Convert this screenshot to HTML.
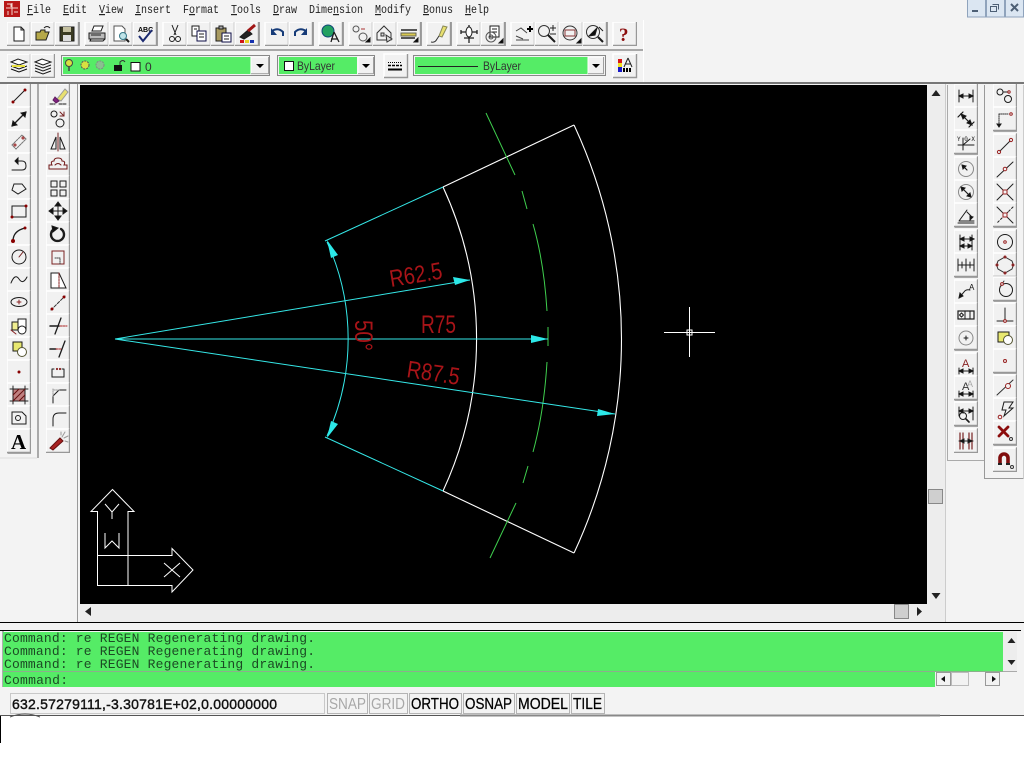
<!DOCTYPE html>
<html><head><meta charset="utf-8"><title>CAD</title>
<style>html,body{margin:0;padding:0;background:#fff;width:1024px;height:768px;overflow:hidden}svg{display:block}</style></head>
<body>
<svg xmlns="http://www.w3.org/2000/svg" width="1024" height="768" viewBox="0 0 1024 768">
<defs>
<filter id="s" x="0" y="0" width="100%" height="100%"><feGaussianBlur stdDeviation="0.35"/></filter>
<g id="b"><rect width="24" height="24" fill="#f1f1f1"/><path d="M0 24V0H24" fill="none" stroke="#fff" stroke-width="1.5"/><path d="M0 23.5H23.5V0" fill="none" stroke="#989898" stroke-width="1.4"/></g>
<path id="dn" d="M-4 -2H4L0 2Z" fill="#000"/>
</defs>
<rect width="1024" height="716" fill="#f3f3f3"/>
<rect y="716" width="1024" height="52" fill="#fff"/>

<!-- title icon + menu -->
<rect x="4" y="1" width="16" height="16" fill="#b81818"/>
<path d="M6 8H18M12 3V15M7 4H11V7M14 12H18M8 11V15" stroke="#f4d8d0" stroke-width="1" fill="none"/>
<g font-family="'Liberation Mono',monospace" font-size="12" fill="#222">
<text x="27" y="13" textLength="24" lengthAdjust="spacingAndGlyphs"><tspan text-decoration="underline">F</tspan>ile</text>
<text x="63" y="13" textLength="24" lengthAdjust="spacingAndGlyphs"><tspan text-decoration="underline">E</tspan>dit</text>
<text x="99" y="13" textLength="24" lengthAdjust="spacingAndGlyphs"><tspan text-decoration="underline">V</tspan>iew</text>
<text x="135" y="13" textLength="36" lengthAdjust="spacingAndGlyphs"><tspan text-decoration="underline">I</tspan>nsert</text>
<text x="183" y="13" textLength="36" lengthAdjust="spacingAndGlyphs">F<tspan text-decoration="underline">o</tspan>rmat</text>
<text x="231" y="13" textLength="30" lengthAdjust="spacingAndGlyphs"><tspan text-decoration="underline">T</tspan>ools</text>
<text x="273" y="13" textLength="24" lengthAdjust="spacingAndGlyphs"><tspan text-decoration="underline">D</tspan>raw</text>
<text x="309" y="13" textLength="54" lengthAdjust="spacingAndGlyphs">Dime<tspan text-decoration="underline">n</tspan>sion</text>
<text x="375" y="13" textLength="36" lengthAdjust="spacingAndGlyphs"><tspan text-decoration="underline">M</tspan>odify</text>
<text x="423" y="13" textLength="30" lengthAdjust="spacingAndGlyphs"><tspan text-decoration="underline">B</tspan>onus</text>
<text x="465" y="13" textLength="24" lengthAdjust="spacingAndGlyphs"><tspan text-decoration="underline">H</tspan>elp</text>
</g>
<!-- window buttons -->
<g>
<rect x="967.500" y="-1" width="18" height="18" fill="#dbe6f2" stroke="#8fa3bc"/>
<rect x="986.500" y="-1" width="18" height="18" fill="#dbe6f2" stroke="#8fa3bc"/>
<rect x="1005.500" y="-1" width="18" height="18" fill="#dbe6f2" stroke="#8fa3bc"/>
<path d="M972 11H978" stroke="#4d5f75" stroke-width="2"/>
<path d="M991.500 6.500H997.500V11.500M989.500 8.500H995.500V13.500H989.500Z" transform="translate(1,-2)" stroke="#4d5f75" fill="none"/>
<path d="M1011 4L1018 11M1018 4L1011 11" stroke="#4d5f75" stroke-width="2"/>
</g>

<!-- toolbar separators -->
<path d="M0 50H644" stroke="#a8a8a8" stroke-width="2"/>
<path d="M643.500 20V82" stroke="#fff"/>
<path d="M0 83H1024" stroke="#777" stroke-width="2"/>

<!-- row 1 buttons -->
<g fill="none" stroke="#1a1a1a" filter="url(#s)">
<use href="#b" x="7" y="22"/><g transform="translate(7,22)"><path d="M7 5H14L17 8V19H7Z" fill="#fff"/><path d="M14 5V8H17"/></g>
<use href="#b" x="31" y="22"/><g transform="translate(31,22)"><path d="M5 10H9L10 8H14V10H18L15 18H5Z" fill="#b5a84a"/><path d="M5 18V10" /><path d="M13 6Q16 3 19 6" stroke-width="1"/></g>
<use href="#b" x="55" y="22"/><g transform="translate(55,22)"><rect x="5" y="5" width="14" height="14" fill="#3b3a20"/><rect x="8" y="5" width="8" height="5" fill="#c4c0a0" stroke="none"/><rect x="8" y="13" width="8" height="6" fill="#ddd" stroke="none"/></g>
<use href="#b" x="85" y="22"/><g transform="translate(85,22)"><path d="M9 4H18L16 9H7Z" fill="#fff"/><path d="M4 11H20V17H4Z" fill="#bbb"/><path d="M6 17L5 19H18L20 17M6 13H16"/></g>
<use href="#b" x="109" y="22"/><g transform="translate(109,22)"><path d="M5 4H13L16 7V19H5Z" fill="#fff" stroke="#555"/><circle cx="14" cy="14" r="3.500" fill="#bfe3e8" stroke="#378"/><path d="M17 17L20 20" stroke-width="2"/></g>
<use href="#b" x="133" y="22"/><g transform="translate(133,22)"><text x="5" y="10" font-family="'Liberation Sans',sans-serif" font-size="7" fill="#000" stroke="none" font-weight="bold">ABC</text><path d="M6 14L10 19L19 8" stroke="#1a2a70" stroke-width="2"/></g>
<use href="#b" x="163" y="22"/><g transform="translate(163,22)"><path d="M9 3L13 13M15 3L11 13"/><circle cx="9" cy="17" r="2.500"/><circle cx="15" cy="17" r="2.500"/></g>
<use href="#b" x="187" y="22"/><g transform="translate(187,22)"><path d="M5 4H12V14H5Z" fill="#fff"/><path d="M10 9H19V19H10Z" fill="#fff" stroke="#114"/><path d="M12 12H17M12 15H17M7 7H10"/></g>
<use href="#b" x="211" y="22"/><g transform="translate(211,22)"><path d="M5 6H15V19H5Z" fill="#a89a60"/><path d="M8 4H12V7H8Z" fill="#aaa"/><path d="M11 11H20V20H11Z" fill="#fff" stroke="#114"/><path d="M13 14H18M13 17H18"/></g>
<use href="#b" x="235" y="22"/><g transform="translate(235,22)"><path d="M5 15L13 8L17 12L9 17Z" fill="#222"/><path d="M13 9L20 3" stroke="#a01818" stroke-width="3"/><rect x="5" y="18" width="4" height="3" fill="#d01818" stroke="none"/><rect x="10" y="18" width="4" height="3" fill="#e8d020" stroke="none"/><rect x="15" y="18" width="4" height="3" fill="#1830b0" stroke="none"/></g>
<use href="#b" x="265" y="22"/><g transform="translate(265,22)"><path d="M7 9Q13 5 18 10V14" stroke="#123a78" stroke-width="2"/><path d="M6 6V13H12Z" fill="#123a78" stroke="none"/></g>
<use href="#b" x="289" y="22"/><g transform="translate(289,22)"><path d="M17 9Q11 5 6 10V14" stroke="#123a78" stroke-width="2"/><path d="M18 6V13H12Z" fill="#123a78" stroke="none"/></g>
<use href="#b" x="319" y="22"/><g transform="translate(319,22)"><circle cx="9" cy="9" r="6" fill="#20a060" stroke="#147"/><path d="M15 10L12 20M15 10L20 20M12 17H19" stroke-width="1.300"/></g>
<use href="#b" x="349" y="22"/><g transform="translate(349,22)"><circle cx="7" cy="7" r="3" stroke="#555"/><circle cx="14" cy="15" r="4" stroke="#555"/><path d="M12 7H16" stroke="#a33"/><path d="M17 20L21 20L21 16Z" fill="#000"/></g>
<use href="#b" x="373" y="22"/><g transform="translate(373,22)"><path d="M4 11L11 4L18 11V18H4Z" stroke="#333"/><path d="M8 11H11V14H8ZM13 13L19 17L14 20Z" stroke="#333" fill="#ddd"/></g>
<use href="#b" x="397" y="22"/><g transform="translate(397,22)"><path d="M4 8H20M4 16H18" stroke="#222" stroke-width="1.500"/><path d="M4 11H19V14H4Z" fill="#d8c850" stroke="#665"/><path d="M17 20L21 20L21 16Z" fill="#000"/></g>
<use href="#b" x="427" y="22"/><g transform="translate(427,22)"><path d="M16 4L20 5L15 15L12 14Z" fill="#e8e070" stroke="#885"/><path d="M4 20Q8 21 10 17L12 14" stroke="#333"/></g>
<use href="#b" x="457" y="22"/><g transform="translate(457,22)"><path d="M12 3V21M4 10H20M7 16H17M4 8V12M20 8V12" stroke="#222" stroke-width="1.300"/><ellipse cx="12" cy="10" rx="3" ry="5" fill="#fff"/></g>
<use href="#b" x="481" y="22"/><g transform="translate(481,22)"><path d="M9 4H18V15H9Z" fill="#fff"/><path d="M11 7H16M11 10H16" /><circle cx="10" cy="15" r="5" stroke="#555"/><circle cx="10" cy="15" r="2" stroke="#555"/><path d="M18 21L22 21L22 17Z" fill="#000"/></g>
<use href="#b" x="511" y="22"/><g transform="translate(511,22)"><path d="M5 9L10 6L16 11M5 14L12 17M5 18H18" stroke="#444"/><path d="M16 7H22M19 4V10" stroke="#000" stroke-width="2"/></g>
<use href="#b" x="535" y="22"/><g transform="translate(535,22)"><circle cx="9" cy="9" r="5.500" stroke="#333"/><path d="M13 13L20 20" stroke-width="2"/><path d="M18 3V9M15 6H21M15 12H21" stroke="#222"/></g>
<use href="#b" x="559" y="22"/><g transform="translate(559,22)"><circle cx="11" cy="11" r="7" stroke="#333"/><rect x="6" y="8" width="10" height="6" stroke="#833"/><path d="M18 21L22 21L22 17Z" fill="#000"/></g>
<use href="#b" x="583" y="22"/><g transform="translate(583,22)"><circle cx="10" cy="10" r="6.500" stroke="#333"/><path d="M6 14L14 6L12 13Z" fill="#111"/><path d="M15 15L20 20" stroke-width="2"/><path d="M16 5L20 9" /></g>
<use href="#b" x="613" y="22"/><text x="619" y="41" font-family="'Liberation Serif',serif" font-size="19" font-weight="bold" fill="#8c1010" stroke="none">?</text>
</g>

<!-- row 2 -->
<g fill="none" stroke="#1a1a1a" filter="url(#s)">
<use href="#b" x="7" y="54"/><g transform="translate(7,54)"><path d="M4 8L11 5L20 8L12 11Z" fill="#fff"/><path d="M4 12L12 15L20 12" stroke="#111"/><path d="M4 15L12 18L20 15" stroke="#111"/><path d="M5 12H18" stroke="#e8e040" stroke-width="2"/></g>
<use href="#b" x="31" y="54"/><g transform="translate(31,54)"><path d="M4 8L11 5L20 8L12 11Z" fill="#fff"/><path d="M4 11L12 14L20 11M4 14L12 17L20 14M4 17L12 20L20 17"/></g>
</g>
<rect x="61.500" y="55.500" width="208" height="20" fill="#f2f2f2" stroke="#888"/>
<rect x="63" y="57" width="188" height="17" fill="#55ec66"/>
<g fill="none" stroke="#333">
<circle cx="69" cy="63" r="3.500" fill="#d8e040" stroke="#444"/><path d="M69 67V71" stroke="#444" stroke-width="1.500"/>
<circle cx="85" cy="65" r="4" fill="#d8e040" stroke="#555" stroke-dasharray="2 1"/>
<circle cx="100" cy="65" r="4" fill="#8ac090" stroke="#7a8f80" stroke-dasharray="2 1"/>
<rect x="114" y="65" width="8" height="6" fill="#111" stroke="none"/><path d="M120 65V62Q123 59 125 62"/>
<rect x="131" y="62.500" width="9" height="8.500" fill="#fff" stroke="#111"/>
</g>
<text x="145" y="71" font-family="'Liberation Sans',sans-serif" font-size="12" fill="#333">0</text>
<use href="#b" transform="translate(251,57) scale(.75,.71)"/><use href="#dn" x="260" y="66"/>

<rect x="277.500" y="55.500" width="97" height="20" fill="#f2f2f2" stroke="#888"/>
<rect x="279" y="57" width="78" height="17" fill="#55ec66"/>
<rect x="284.500" y="61.500" width="9" height="9" fill="#fff" stroke="#111"/>
<text x="297" y="70" font-family="'Liberation Sans',sans-serif" font-size="12" fill="#333" textLength="38" lengthAdjust="spacingAndGlyphs">ByLayer</text>
<use href="#b" transform="translate(358,57) scale(.66,.71)"/><use href="#dn" x="366" y="66"/>

<use href="#b" x="384" y="54"/>
<path d="M388 62.500H402" stroke="#000" stroke-dasharray="1 1"/><path d="M388 65.500H402" stroke="#000" stroke-width="1.500" stroke-dasharray="3 1"/><path d="M388 69.500H402" stroke="#000" stroke-width="2"/>

<rect x="413.500" y="55.500" width="192" height="20" fill="#f2f2f2" stroke="#888"/>
<rect x="415" y="57" width="173" height="17" fill="#55ec66"/>
<path d="M418 66.500H478" stroke="#222"/>
<text x="483" y="70" font-family="'Liberation Sans',sans-serif" font-size="12" fill="#333" textLength="38" lengthAdjust="spacingAndGlyphs">ByLayer</text>
<use href="#b" transform="translate(588,57) scale(.66,.71)"/><use href="#dn" x="596" y="66"/>

<use href="#b" x="613" y="54"/>
<rect x="618" y="59" width="4" height="4" fill="#d81818"/><rect x="618" y="63" width="4" height="4" fill="#f0e020"/><rect x="618" y="67" width="4" height="5" fill="#1818c8"/>
<path d="M628 58L624 67M628 58L632 67M625 64H631" stroke="#222" fill="none"/><path d="M624 68V72M627 68V72M630 68V72" stroke="#000" stroke-width="2"/>

<!-- left toolbars frame -->
<path d="M38 84V458" stroke="#aaa" stroke-width="2"/>
<path d="M77.500 84V622" stroke="#999"/>
<path d="M0 458H37" stroke="#ddd"/>

<!-- left col 1 -->
<g fill="none" stroke="#1a1a1a" stroke-linecap="round" filter="url(#s)">
<use href="#b" x="7" y="84"/><g transform="translate(7,84)"><path d="M6 18L18 6"/><circle cx="6" cy="18" r="1" fill="#800" stroke="#800"/><circle cx="18" cy="6" r="1" fill="#800" stroke="#800"/></g>
<use href="#b" x="7" y="107"/><g transform="translate(7,107)"><path d="M5 19L19 5" stroke-width="1.300"/><path d="M5 19L6 14L10 18ZM19 5L18 10L14 6Z" fill="#111"/></g>
<use href="#b" x="7" y="130"/><g transform="translate(7,130)"><path d="M5 15L15 5L19 9L9 19Z" stroke="#777" stroke-dasharray="2 1"/><circle cx="8" cy="15" r="1" stroke="#922"/><circle cx="16" cy="8" r="1" stroke="#922"/></g>
<use href="#b" x="7" y="153"/><g transform="translate(7,153)"><path d="M5 17H15Q19 17 19 13Q19 8 15 8H11"/><path d="M11 5V11L8 8Z" fill="#111"/></g>
<use href="#b" x="7" y="176"/><g transform="translate(7,176)"><path d="M8 8H16L20 13L12 18L6 14Z" transform="translate(-1,0)"/></g>
<use href="#b" x="7" y="199"/><g transform="translate(7,199)"><rect x="5" y="7" width="14" height="11"/><circle cx="5" cy="18" r="1" fill="#800" stroke="#800"/><circle cx="19" cy="7" r="1" fill="#800" stroke="#800"/></g>
<use href="#b" x="7" y="222"/><g transform="translate(7,222)"><path d="M6 19Q6 9 18 6" stroke-width="1.300"/><circle cx="6" cy="19" r="1.500" fill="#800" stroke="#800"/><circle cx="18" cy="6" r="1" fill="#800" stroke="#800"/></g>
<use href="#b" x="7" y="245"/><g transform="translate(7,245)"><circle cx="12" cy="12" r="7"/><path d="M12 12L16 7" stroke="#722"/></g>
<use href="#b" x="7" y="268"/><g transform="translate(7,268)"><path d="M4 15Q8 5 12 11T20 9"/></g>
<use href="#b" x="7" y="291"/><g transform="translate(7,291)"><ellipse cx="12" cy="11" rx="8" ry="4.500"/><path d="M10 11H14M12 9V13" stroke="#822"/></g>
<use href="#b" x="7" y="314"/><g transform="translate(7,314)"><path d="M5 8H13V16H5Z" fill="#f0ee90"/><path d="M11 5H19V15H11Z" fill="#fff"/><circle cx="15" cy="16" r="4" fill="#fff"/><path d="M4 16L9 20" stroke="#822"/></g>
<use href="#b" x="7" y="337"/><g transform="translate(7,337)"><rect x="6" y="5" width="9" height="9" fill="#e8e870"/><circle cx="15" cy="15" r="4.500" fill="#fff" stroke="#553"/></g>
<use href="#b" x="7" y="360"/><circle cx="19" cy="372" r="1" fill="#800" stroke="#800"/>
<use href="#b" x="7" y="383"/><g transform="translate(7,383)"><rect x="6" y="6" width="12" height="12" fill="#c08080" stroke="#222"/><path d="M6 3V21M18 3V21M3 6H21M3 18H21" stroke="#222"/><path d="M6 12L12 6M6 18L18 6M12 18L18 12" stroke="#611"/></g>
<use href="#b" x="7" y="406"/><g transform="translate(7,406)"><path d="M5 6H15L19 10V18H5Z"/><circle cx="11" cy="12" r="2.500"/></g>
<use href="#b" x="7" y="429"/><text x="11" y="449" font-family="'Liberation Serif',serif" font-size="21" font-weight="bold" fill="#000" stroke="none">A</text>
</g>

<!-- left col 2 -->
<g fill="none" stroke="#1a1a1a" stroke-linecap="round" filter="url(#s)">
<use href="#b" x="46" y="84"/><g transform="translate(46,84)"><path d="M11 15L19 5L22 8L15 17Z" fill="#e8e070" stroke="#999"/><path d="M9 13L13 17L10 19L7 16Z" fill="#802080" stroke="#602060"/><path d="M4 20H9M13 20H20" stroke-dasharray="3 1"/></g>
<use href="#b" x="46" y="107"/><g transform="translate(46,107)"><circle cx="8" cy="7" r="3"/><circle cx="14" cy="16" r="4"/><path d="M14 5L18 9M18 5V9H14" stroke="#722"/></g>
<use href="#b" x="46" y="130"/><g transform="translate(46,130)"><path d="M12 3V21" stroke="#722"/><path d="M10 7L5 19H10ZM14 7L19 19H14Z"/></g>
<use href="#b" x="46" y="153"/><g transform="translate(46,153)"><path d="M6 12Q4 8 8 8Q8 5 12 5Q16 5 16 8Q20 8 18 12H21V16H3V12Z" stroke="#701818"/><path d="M9 12Q12 9 15 12"  stroke="#701818"/></g>
<use href="#b" x="46" y="176"/><g transform="translate(46,176)"><rect x="5" y="5" width="6" height="6"/><rect x="14" y="5" width="6" height="6"/><rect x="5" y="14" width="6" height="6"/><rect x="14" y="14" width="6" height="6"/></g>
<use href="#b" x="46" y="199"/><g transform="translate(46,199)"><path d="M12 4V20M4 12H20" /><path d="M12 3L9 7H15ZM12 21L9 17H15ZM3 12L7 9V15ZM21 12L17 9V15Z" fill="#111"/></g>
<use href="#b" x="46" y="222"/><g transform="translate(46,222)"><path d="M15 7A6.500 6.500 0 1 1 8 7" stroke-width="2.400"/><path d="M6 4L12 6L7 10Z" fill="#111"/></g>
<use href="#b" x="46" y="245"/><g transform="translate(46,245)"><rect x="6" y="6" width="12" height="13" stroke="#7a2020"/><path d="M9 13H14V19" stroke="#444" stroke-dasharray="1 1"/></g>
<use href="#b" x="46" y="268"/><g transform="translate(46,268)"><path d="M5 5H13L20 20H5Z" fill="#fff"/><path d="M13 5V20" stroke="#822" stroke-dasharray="2 1"/></g>
<use href="#b" x="46" y="291"/><g transform="translate(46,291)"><path d="M5 19L19 5" stroke="#333" stroke-dasharray="3 1.500"/><circle cx="6" cy="18" r="1" stroke="#800" fill="#800"/><circle cx="18" cy="6" r="1" stroke="#800" fill="#800"/></g>
<use href="#b" x="46" y="314"/><g transform="translate(46,314)"><path d="M15 4L9 20" stroke-width="1.300"/><path d="M4 12H13" stroke-width="1.500"/><path d="M14 12H21" stroke="#a22" stroke-dasharray="2 1"/></g>
<use href="#b" x="46" y="337"/><g transform="translate(46,337)"><path d="M19 4L13 20" stroke-width="1.300"/><path d="M4 12H10" stroke-width="1.500"/><path d="M10 12H15" stroke="#a22" stroke-dasharray="2 1"/></g>
<use href="#b" x="46" y="360"/><g transform="translate(46,360)"><path d="M6 9V17H18V9M6 9H8M16 9H18"/><circle cx="11" cy="9" r=".6" stroke="#822"/><circle cx="14" cy="9" r=".6" stroke="#822"/></g>
<use href="#b" x="46" y="383"/><g transform="translate(46,383)"><path d="M7 20V13L13 7H20"/><path d="M7 13V5M13 7H7" stroke="#999" stroke-dasharray="1 1"/></g>
<use href="#b" x="46" y="406"/><g transform="translate(46,406)"><path d="M7 20V13Q7 7 13 7H20"/></g>
<use href="#b" x="46" y="429"/><g transform="translate(46,429)"><path d="M4 19L14 9L17 12L7 21Z" fill="#a82020" stroke="#611"/><path d="M16 8L19 3M18 9L22 7M15 6L15 3M19 12L22 13" stroke="#999"/></g>
</g>

<!-- canvas -->
<rect x="80" y="85" width="847" height="519" fill="#000"/>
<g fill="none">
<g stroke="#fff" stroke-width="1.100">
<path d="M443 187L574 125"/><path d="M443 491L574 553"/>
<path d="M443 187A361 361 0 0 1 443 491"/>
<path d="M574 125A506 506 0 0 1 574 553"/>
</g>
<g stroke="#3fcf4e" stroke-width="1">
<path d="M486 113L515 175"/><path d="M522 191L527 209"/><path d="M533 224Q544 262 547 311"/><path d="M548 327V346"/><path d="M547 362Q544 412 533 452"/><path d="M528 466L523 483"/><path d="M516 503L490 558"/>
</g>
<g stroke="#35e8e8" stroke-width="1">
<path d="M325 241L443 187"/><path d="M325 437L443 491"/>
<path d="M115 339L470 280"/><path d="M115 339H548"/><path d="M115 339L615 414"/>
<path d="M327 242A233 233 0 0 1 327 436"/>
</g>
<g fill="#2ce8e8" stroke="none">
<path d="M470 280L453 277L455 285Z"/>
<path d="M548 339L531 335V343Z"/>
<path d="M615 414L598 409L597 416Z"/>
<path d="M327 240L331 258L338 255Z"/>
<path d="M327 438L331 421L338 424Z"/>
</g>
</g>
<!-- dim text -->
<g font-family="'Liberation Sans',sans-serif" fill="#a81418" font-size="24" font-weight="normal">
<text transform="translate(391,287) rotate(-9.400)" textLength="53" lengthAdjust="spacingAndGlyphs">R62.5</text>
<text x="421" y="333" font-size="25" textLength="35" lengthAdjust="spacingAndGlyphs">R75</text>
<text transform="translate(406,377) rotate(8.500)" textLength="53" lengthAdjust="spacingAndGlyphs">R87.5</text>
<text transform="translate(355,320) rotate(90)" font-size="25" textLength="31" lengthAdjust="spacingAndGlyphs">50°</text>
</g>
<!-- crosshair -->
<path d="M664 332.500H715M689.500 307V357" stroke="#fff"/>
<rect x="687" y="330" width="5" height="5" fill="none" stroke="#fff"/>
<!-- UCS -->
<g fill="none" stroke="#fff">
<path d="M97.500 585.500V511.500H91L112.500 489.500L134 511.500H128V555.500H172V548.500L193 570L172 592V585.500Z"/>
<path d="M97.500 555.500H128V585.500"/>
<path d="M105 504L112 512L119 504M112 512V519"/>
<path d="M105 533V548L112 541L119 548V533"/>
<path d="M164 563L180 577M180 563L164 577"/>
</g>

<!-- scrollbars -->
<rect x="927" y="85" width="18" height="519" fill="#ededed"/>
<path d="M931.500 96L936 90L940.500 96Z" fill="#222"/><path d="M931.500 593L936 599L940.500 593Z" fill="#222"/>
<rect x="928.500" y="489.500" width="14" height="14" fill="#cfcfcf" stroke="#888"/>
<rect x="80" y="604" width="865" height="18" fill="#ededed"/>
<path d="M91 607L85 611.500L91 616Z" fill="#222"/><path d="M917 607L922 611.500L917 616Z" fill="#222"/>
<rect x="894.500" y="604.500" width="14" height="14" fill="#cfcfcf" stroke="#888"/>
<path d="M945.500 84V622" stroke="#ccc"/>

<!-- right toolbars frame -->
<path d="M947.500 85V460.500H984" fill="none" stroke="#aaa"/>
<path d="M984.500 85V478.500H1023.500" fill="none" stroke="#999"/>
<path d="M1023.500 85V478" stroke="#ccc"/>

<!-- right col 1 -->
<g fill="none" stroke="#1a1a1a" stroke-linecap="round" filter="url(#s)">
<use href="#b" x="954" y="84"/><g transform="translate(954,84)"><path d="M5 6V18M19 6V18M5 12H19"/><path d="M5 12L9 10V14ZM19 12L15 10V14Z" fill="#111"/></g>
<use href="#b" x="954" y="107"/><g transform="translate(954,107)"><path d="M4 10L9 5M15 20L20 15M8 8L17 17" stroke-width="1.200"/><path d="M7 7L12 9L9 12ZM18 18L13 16L16 13Z" fill="#111"/></g>
<use href="#b" x="954" y="130"/><g transform="translate(954,130)"><path d="M9 8V20M4 15H20M9 15L16 9" /><text x="3" y="11" font-family="'Liberation Mono',monospace" font-size="6" fill="#111" stroke="none">Y 0 X</text></g>
<use href="#b" x="954" y="157"/><g transform="translate(954,157)"><circle cx="12" cy="12" r="7.500" stroke="#888"/><path d="M9 9L13 13" stroke-width="1.200"/><path d="M8 8L12 9L9 12Z" fill="#111"/></g>
<use href="#b" x="954" y="180"/><g transform="translate(954,180)"><circle cx="12" cy="12" r="7.500" stroke="#888"/><path d="M8 8L16 16" stroke-width="1.200"/><path d="M7 7L11 8L8 11ZM17 17L13 16L16 13Z" fill="#111"/></g>
<use href="#b" x="954" y="203"/><g transform="translate(954,203)"><path d="M5 18H20M5 18L13 7" /><path d="M13 9L17 13" /><path d="M16 13L19 14L16 17Z" fill="#111"/><path d="M4 20H20"/></g>
<use href="#b" x="954" y="230"/><g transform="translate(954,230)"><path d="M6 5V20M18 5V20M6 9H20M6 16H18" /><path d="M6 9L10 7V11ZM20 9L16 7V11ZM6 16L10 14V18ZM18 16L14 14V18Z" fill="#111"/></g>
<use href="#b" x="954" y="253"/><g transform="translate(954,253)"><path d="M4 6V18M12 6V18M20 6V18M4 12H20"/><path d="M8 9V15M16 9V15"/></g>
<use href="#b" x="954" y="280"/><g transform="translate(954,280)"><path d="M5 18L10 12Q12 9 16 10" /><path d="M5 18L6 13L9 16Z" fill="#111"/><text x="15" y="10" font-family="'Liberation Sans',sans-serif" font-size="8" fill="#111" stroke="none">A</text></g>
<use href="#b" x="954" y="303"/><g transform="translate(954,303)"><rect x="4" y="8" width="16" height="8" stroke-width="1.200"/><path d="M11 8V16M16 8V16"/><path d="M7.500 10L9.500 12L7.500 14L5.500 12Z"/></g>
<use href="#b" x="954" y="326"/><g transform="translate(954,326)"><circle cx="12" cy="12" r="7" stroke="#888"/><path d="M10 12H14M12 10V14"/></g>
<use href="#b" x="954" y="353"/><g transform="translate(954,353)"><path d="M5 15V21M19 15V21M5 18H19"/><path d="M5 18L9 16V20ZM19 18L15 16V20Z" fill="#111"/><text x="8" y="14" font-family="'Liberation Sans',sans-serif" font-size="11" fill="#822" stroke="none">A</text></g>
<use href="#b" x="954" y="376"/><g transform="translate(954,376)"><path d="M5 15V21M19 15V21M5 18H19"/><path d="M5 18L9 16V20ZM19 18L15 16V20Z" fill="#111"/><text x="8" y="14" font-family="'Liberation Sans',sans-serif" font-size="11" fill="#333" stroke="none">A</text><text x="13" y="11" font-family="'Liberation Sans',sans-serif" font-size="9" fill="#aaa" stroke="none">A</text></g>
<use href="#b" x="954" y="402"/><g transform="translate(954,402)"><path d="M5 5V14M19 5V18M5 9H19"/><path d="M5 9L9 7V11ZM19 9L15 7V11Z" fill="#111"/><circle cx="9" cy="14" r="3.500"/><path d="M12 17L15 20" stroke-width="1.600"/></g>
<use href="#b" x="954" y="429"/><g transform="translate(954,429)"><path d="M6 4V20M18 4V20M9 4V20M15 4V20" stroke="#722" stroke-width="1.200"/><path d="M5 12H19"/><path d="M6 12L10 10V14ZM18 12L14 10V14Z" fill="#111"/></g>
</g>

<!-- right col 2 -->
<g fill="none" stroke="#1a1a1a" stroke-linecap="round" filter="url(#s)">
<use href="#b" x="993" y="84"/><g transform="translate(993,84)"><circle cx="7" cy="8" r="3"/><circle cx="15" cy="15" r="3.500"/><path d="M10 8H15"/><circle cx="16" cy="8" r="1.200" stroke="#922"/></g>
<use href="#b" x="993" y="107"/><g transform="translate(993,107)"><path d="M6 7H16" stroke="#333" stroke-dasharray="1 1"/><path d="M6 7V19" stroke="#333" stroke-dasharray="1 1"/><circle cx="18" cy="7" r="1.300" stroke="#922"/><path d="M4 17L6 20L8 17Z" fill="#111"/></g>
<use href="#b" x="993" y="134"/><g transform="translate(993,134)"><path d="M7 17L17 7" stroke="#222"/><circle cx="6" cy="18" r="1.600" stroke="#922"/><circle cx="18" cy="6" r="1.600" stroke="#922"/></g>
<use href="#b" x="993" y="157"/><g transform="translate(993,157)"><path d="M4 20L20 5" stroke="#222"/><circle cx="12" cy="12" r="1.800" stroke="#922" fill="#f2f2f2"/></g>
<use href="#b" x="993" y="180"/><g transform="translate(993,180)"><path d="M4 4L20 20M20 4L4 20" stroke="#222"/><rect x="10" y="10" width="4" height="4" stroke="#922" fill="#f2f2f2"/></g>
<use href="#b" x="993" y="203"/><g transform="translate(993,203)"><path d="M4 4L20 20M12 12L15 9" stroke="#222"/><path d="M20 4L15 9M9 15L4 20" stroke="#222" stroke-dasharray="2 2"/><rect x="10" y="10" width="4" height="4" stroke="#922" fill="#f2f2f2"/></g>
<use href="#b" x="993" y="230"/><g transform="translate(993,230)"><circle cx="12" cy="12" r="7.500"/><circle cx="12" cy="12" r="1.300" stroke="#922"/></g>
<use href="#b" x="993" y="253"/><g transform="translate(993,253)"><path d="M12 4L19 8Q21 12 19 16L12 20L5 16Q3 12 5 8Z" stroke="#333"/><circle cx="12" cy="4" r="1" stroke="#922"/><circle cx="12" cy="20" r="1" stroke="#922"/><circle cx="4" cy="12" r="1" stroke="#922"/><circle cx="20" cy="12" r="1" stroke="#922"/></g>
<use href="#b" x="993" y="277"/><g transform="translate(993,277)"><circle cx="13" cy="13" r="6.500"/><path d="M7 10L11 4" stroke="#333"/><circle cx="9" cy="7" r="1.400" stroke="#922" fill="#f2f2f2"/></g>
<use href="#b" x="993" y="303"/><g transform="translate(993,303)"><path d="M12 5V18M4 18H20" stroke="#222"/><circle cx="12" cy="18" r="1.400" stroke="#922" fill="#f2f2f2"/></g>
<use href="#b" x="993" y="326"/><g transform="translate(993,326)"><rect x="5" y="6" width="11" height="10" fill="#e8e870"/><circle cx="15" cy="14" r="4.500" fill="#fff" stroke="#553"/></g>
<use href="#b" x="993" y="349"/><circle cx="1005" cy="361" r="1.500" stroke="#922" fill="none"/>
<use href="#b" x="993" y="375"/><g transform="translate(993,375)"><path d="M4 20L20 5" stroke="#333"/><circle cx="15" cy="11" r="2.500" stroke="#922" fill="#f2f2f2"/></g>
<use href="#b" x="993" y="398"/><g transform="translate(993,398)"><path d="M11 4H20L16 10H20L11 18L13 12H9Z"/><circle cx="7" cy="19" r="1.800" stroke="#922"/></g>
<use href="#b" x="993" y="421"/><g transform="translate(993,421)"><path d="M6 6L15 15M15 6L6 15" stroke="#8c1010" stroke-width="2.800"/><circle cx="18" cy="18" r="1.500" stroke="#333"/></g>
<use href="#b" x="993" y="448"/><g transform="translate(993,448)"><path d="M7 16V10A4 4 0 0 1 15 10V16" stroke="#801010" stroke-width="3.600" stroke-linecap="butt"/><path d="M5 16H9M13 16H17" stroke="#222" stroke-width="2" stroke-linecap="butt"/><circle cx="19" cy="19" r="1.500" stroke="#333"/></g>
</g>

<!-- command window -->
<path d="M0 622.500H1024" stroke="#000"/>
<path d="M0 630.500H1021" stroke="#000"/>
<path d="M3 631V687" stroke="#666"/>
<rect x="3" y="632" width="1000" height="55" fill="#55ec66"/>
<path d="M3 671.500H1003" stroke="#8caf8c"/>
<rect x="1003" y="632" width="14" height="39" fill="#ededed"/>
<path d="M1007.500 643L1011.500 638L1015.500 643Z" fill="#222"/><path d="M1007.500 660L1011.500 665L1015.500 660Z" fill="#222"/>
<path d="M1003 671.500H1017" stroke="#aaa"/>
<rect x="935" y="672" width="68" height="15" fill="#f3f3f3"/>
<rect x="936.500" y="672.500" width="14" height="13" fill="#f2f2f2" stroke="#999"/>
<rect x="951.500" y="672.500" width="17" height="13" fill="#f2f2f2" stroke="#bbb"/>
<rect x="985.500" y="672.500" width="14" height="13" fill="#f2f2f2" stroke="#999"/>
<path d="M945 676V682L941 679Z" fill="#111"/><path d="M992 676V682L996 679Z" fill="#111"/>
<g font-family="'Liberation Mono',monospace" font-size="13" fill="#1c4a24">
<text x="4" y="642" textLength="311" lengthAdjust="spacing">Command: re REGEN Regenerating drawing.</text>
<text x="4" y="655" textLength="311" lengthAdjust="spacing">Command: re REGEN Regenerating drawing.</text>
<text x="4" y="668" textLength="311" lengthAdjust="spacing">Command: re REGEN Regenerating drawing.</text>
<text x="4" y="684" textLength="64" lengthAdjust="spacing">Command:</text>
</g>

<!-- status bar -->
<rect x="10.500" y="693.500" width="314" height="20" fill="#f3f3f3" stroke="#c8c8c8"/>
<text x="12" y="709" font-family="'Liberation Sans',sans-serif" font-size="14" fill="#111" textLength="265" lengthAdjust="spacing" stroke="#111" stroke-width=".4">632.57279111,-3.30781E+02,0.00000000</text>
<g fill="none" stroke="#b4b4b4">
<rect x="327.500" y="693.500" width="40" height="20"/>
<rect x="369.500" y="693.500" width="38" height="20"/>
<rect x="409.500" y="693.500" width="52" height="20"/>
<rect x="463.500" y="693.500" width="51" height="20"/>
<rect x="516.500" y="693.500" width="53" height="20"/>
<rect x="571.500" y="693.500" width="33" height="20"/>
</g>
<g font-family="'Liberation Sans',sans-serif" font-size="15.500" stroke-width=".25">
<text x="329" y="709" fill="#a8a8a8" textLength="37" lengthAdjust="spacingAndGlyphs">SNAP</text>
<text x="371" y="709" fill="#a8a8a8" textLength="34" lengthAdjust="spacingAndGlyphs">GRID</text>
<text x="411" y="709" fill="#000" stroke="#000" textLength="48" lengthAdjust="spacingAndGlyphs">ORTHO</text>
<text x="465" y="709" fill="#000" stroke="#000" textLength="47" lengthAdjust="spacingAndGlyphs">OSNAP</text>
<text x="518" y="709" fill="#000" stroke="#000" textLength="50" lengthAdjust="spacingAndGlyphs">MODEL</text>
<text x="573" y="709" fill="#000" stroke="#000" textLength="29" lengthAdjust="spacingAndGlyphs">TILE</text>
</g>
<path d="M0 715.500H1024" stroke="#555"/>
<path d="M460 715.500H940" stroke="#888" stroke-width="2"/>
<path d="M0.500 716V743" stroke="#000"/>
<path d="M10 717Q25 711 40 717" fill="none" stroke="#555"/>
</svg>
</body></html>
